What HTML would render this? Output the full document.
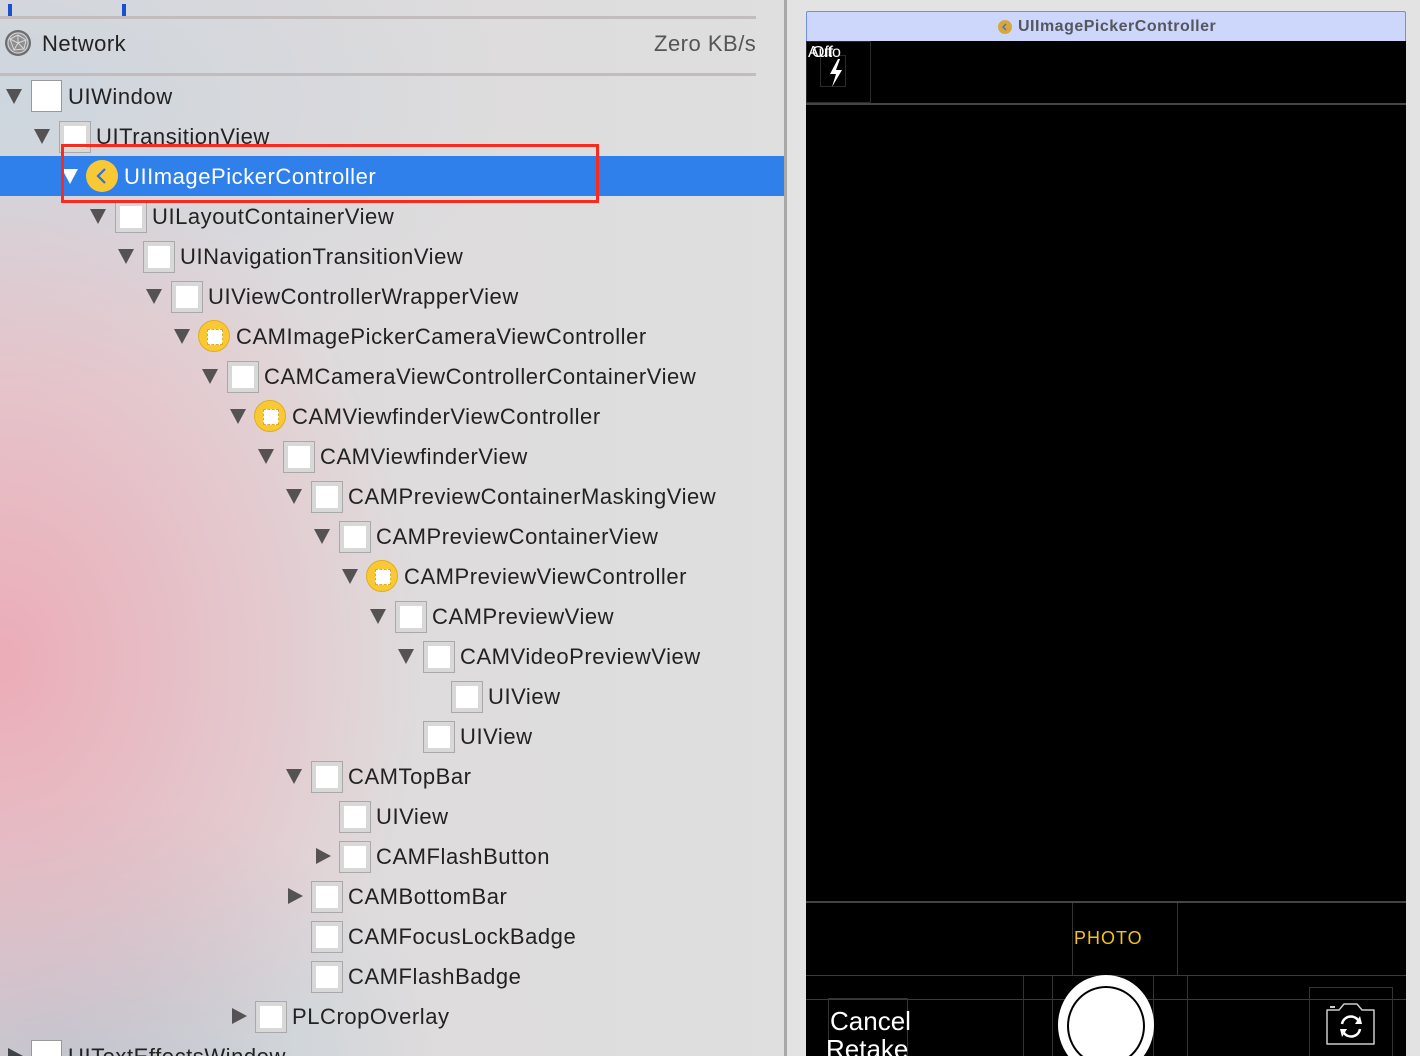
<!DOCTYPE html>
<html style="width:1420px;height:1056px;overflow:hidden"><head><meta charset="utf-8"><style>
*{margin:0;padding:0;box-sizing:border-box}
body{width:1420px;height:1056px;overflow:hidden;position:relative;font-family:"Liberation Sans",sans-serif;background:#e3e3e3}
#left{position:absolute;left:0;top:0;width:784px;height:1056px;overflow:hidden;
background:
radial-gradient(ellipse 420px 520px at 0px 660px, rgba(236,170,182,0.95), rgba(236,170,182,0) 100%),
radial-gradient(ellipse 380px 260px at 60px 1056px, rgba(185,205,214,1), rgba(185,205,214,0) 100%),
radial-gradient(ellipse 520px 300px at 0px 100px, rgba(205,214,222,1), rgba(205,214,222,0) 100%),
linear-gradient(90deg,#e0d8da 0%,#dedcdd 60%,#dfdfdf 100%);}
#divider{position:absolute;left:784px;top:0;width:3px;height:1056px;background:#a9a7a8}
.hl{position:absolute;left:0;width:756px;height:3px;background:#c2bcbd}
.row{position:absolute;left:0;width:784px;height:40px}
.tri{position:absolute;top:13px;width:0;height:0;border-left:8px solid transparent;border-right:8px solid transparent;border-top:15px solid #555254}
.trir{position:absolute;top:12px;width:0;height:0;border-top:8px solid transparent;border-bottom:8px solid transparent;border-left:15px solid #555254}
.box{position:absolute;top:5px;width:32px;height:32px;background:#d8d8d8;border:1px solid #a9a9a9}
.box::after{content:"";position:absolute;left:4px;top:4px;width:22px;height:22px;background:#fff}
.vc{position:absolute;top:4px;width:32px;height:32px;border-radius:50%;background:#f8c935;border:1px solid #e0ad20}
.vc::after{content:"";position:absolute;left:8px;top:8px;width:14px;height:14px;background:#fff;border:1px dashed #e0ad20}
.t{position:absolute;top:8px;font-size:22px;color:#222;white-space:nowrap;letter-spacing:0.55px}
</style></head><body>
<div id="left">
  <div style="position:absolute;left:8px;top:4px;width:4px;height:12px;background:#1a4fd0"></div>
  <div style="position:absolute;left:122px;top:4px;width:4px;height:12px;background:#1a4fd0"></div>
  <div class="hl" style="top:16px"></div>
  <div class="hl" style="top:73px"></div>
  <svg style="position:absolute;left:4px;top:29px" width="28" height="28" viewBox="0 0 28 28"><circle cx="14" cy="14" r="13" fill="#6d6d6f"/><circle cx="14" cy="14" r="11" fill="#8e8e90"/><g stroke="#d8d8d8" stroke-width="1" fill="none"><circle cx="14" cy="14" r="10"/><path d="M6 10 L14 6 L22 11 L20 20 L10 21 Z M14 6 L14 14 L22 11 M14 14 L10 21 M14 14 L20 20 M6 10 L14 14"/></g></svg>
  <div style="position:absolute;left:42px;top:31px;font-size:22px;color:#222;letter-spacing:0.5px">Network</div>
  <div style="position:absolute;left:654px;top:31px;font-size:22px;color:#555;letter-spacing:0.5px">Zero KB/s</div>
</div>
<div id="divider"></div>

<div id="rows" style="position:absolute;left:0;top:0;width:784px;height:1056px;overflow:hidden">
<div class="row" style="top:76px"><div class="tri" style="left:6px"></div><div style="position:absolute;left:31px;top:4px;width:31px;height:32px;background:#fff;border:1px solid #999"></div><div class="t" style="left:68px">UIWindow</div></div>
<div class="row" style="top:116px"><div class="tri" style="left:34px"></div><div class="box" style="left:59px"></div><div class="t" style="left:96px">UITransitionView</div></div>
<div class="row" style="top:156px;background:#2f80ea"><div class="tri" style="left:62px;border-top-color:#fff"></div><div style="position:absolute;left:86px;top:4px;width:32px;height:32px;border-radius:50%;background:#f8c935"></div><svg style="position:absolute;left:86px;top:4px" width="32" height="32"><path d="M19 9 L12 16 L19 23" stroke="#2f6fe0" stroke-width="2.2" fill="none"/></svg><div class="t" style="left:124px;color:#fff">UIImagePickerController</div></div>
<div class="row" style="top:196px"><div class="tri" style="left:90px"></div><div class="box" style="left:115px"></div><div class="t" style="left:152px">UILayoutContainerView</div></div>
<div class="row" style="top:236px"><div class="tri" style="left:118px"></div><div class="box" style="left:143px"></div><div class="t" style="left:180px">UINavigationTransitionView</div></div>
<div class="row" style="top:276px"><div class="tri" style="left:146px"></div><div class="box" style="left:171px"></div><div class="t" style="left:208px">UIViewControllerWrapperView</div></div>
<div class="row" style="top:316px"><div class="tri" style="left:174px"></div><div class="vc" style="left:198px"></div><div class="t" style="left:236px">CAMImagePickerCameraViewController</div></div>
<div class="row" style="top:356px"><div class="tri" style="left:202px"></div><div class="box" style="left:227px"></div><div class="t" style="left:264px">CAMCameraViewControllerContainerView</div></div>
<div class="row" style="top:396px"><div class="tri" style="left:230px"></div><div class="vc" style="left:254px"></div><div class="t" style="left:292px">CAMViewfinderViewController</div></div>
<div class="row" style="top:436px"><div class="tri" style="left:258px"></div><div class="box" style="left:283px"></div><div class="t" style="left:320px">CAMViewfinderView</div></div>
<div class="row" style="top:476px"><div class="tri" style="left:286px"></div><div class="box" style="left:311px"></div><div class="t" style="left:348px">CAMPreviewContainerMaskingView</div></div>
<div class="row" style="top:516px"><div class="tri" style="left:314px"></div><div class="box" style="left:339px"></div><div class="t" style="left:376px">CAMPreviewContainerView</div></div>
<div class="row" style="top:556px"><div class="tri" style="left:342px"></div><div class="vc" style="left:366px"></div><div class="t" style="left:404px">CAMPreviewViewController</div></div>
<div class="row" style="top:596px"><div class="tri" style="left:370px"></div><div class="box" style="left:395px"></div><div class="t" style="left:432px">CAMPreviewView</div></div>
<div class="row" style="top:636px"><div class="tri" style="left:398px"></div><div class="box" style="left:423px"></div><div class="t" style="left:460px">CAMVideoPreviewView</div></div>
<div class="row" style="top:676px"><div class="box" style="left:451px"></div><div class="t" style="left:488px">UIView</div></div>
<div class="row" style="top:716px"><div class="box" style="left:423px"></div><div class="t" style="left:460px">UIView</div></div>
<div class="row" style="top:756px"><div class="tri" style="left:286px"></div><div class="box" style="left:311px"></div><div class="t" style="left:348px">CAMTopBar</div></div>
<div class="row" style="top:796px"><div class="box" style="left:339px"></div><div class="t" style="left:376px">UIView</div></div>
<div class="row" style="top:836px"><div class="trir" style="left:316px"></div><div class="box" style="left:339px"></div><div class="t" style="left:376px">CAMFlashButton</div></div>
<div class="row" style="top:876px"><div class="trir" style="left:288px"></div><div class="box" style="left:311px"></div><div class="t" style="left:348px">CAMBottomBar</div></div>
<div class="row" style="top:916px"><div class="box" style="left:311px"></div><div class="t" style="left:348px">CAMFocusLockBadge</div></div>
<div class="row" style="top:956px"><div class="box" style="left:311px"></div><div class="t" style="left:348px">CAMFlashBadge</div></div>
<div class="row" style="top:996px"><div class="trir" style="left:232px"></div><div class="box" style="left:255px"></div><div class="t" style="left:292px">PLCropOverlay</div></div>
<div class="row" style="top:1036px"><div class="trir" style="left:8px;border-left-color:#3f4446"></div><div style="position:absolute;left:31px;top:4px;width:31px;height:32px;background:#fff;border:1px solid #999"></div><div class="t" style="left:68px">UITextEffectsWindow</div></div>
</div>
<div style="position:absolute;left:61px;top:144px;width:538px;height:59px;border:3px solid #fb2a1e"></div>

<div style="position:absolute;left:806px;top:11px;width:600px;height:31px;background:#cdd6fb;border:1px solid #6f8fe6;border-bottom:none;border-radius:2px 2px 0 0"></div>
<div style="position:absolute;left:998px;top:20px;width:14px;height:14px;border-radius:50%;background:#d6a83c"></div>
<svg style="position:absolute;left:998px;top:20px" width="14" height="14"><path d="M8 4 L5 7 L8 10" stroke="#4a6fd0" stroke-width="1.4" fill="none"/></svg>
<div style="position:absolute;left:1018px;top:18px;font-size:16px;font-weight:bold;color:#55575e;letter-spacing:0.5px">UIImagePickerController</div>
<div style="position:absolute;left:806px;top:41px;width:600px;height:1015px;background:#000;overflow:hidden">
  <div style="position:absolute;left:0;top:0;width:65px;height:62px;border:1px solid #2a2a2a"></div>
  <div style="position:absolute;left:14px;top:14px;width:26px;height:32px;border:1px solid #2a2a2a"></div>
  <div style="position:absolute;left:2px;top:3px;font-size:16px;color:#fff">Auto</div>
  <div style="position:absolute;left:6px;top:3px;font-size:16px;color:#fff">Off</div>
  <svg style="position:absolute;left:22px;top:18px" width="16" height="28"><path d="M10 0 L2 15 L8 15 L4 28 L14 11 L8 11 L12 0 Z" fill="#fff"/></svg>
  <div style="position:absolute;left:0;top:62px;width:600px;height:2px;background:#444"></div>
  <div style="position:absolute;left:0;top:860px;width:600px;height:2px;background:#444"></div>
  <div style="position:absolute;left:266px;top:862px;width:106px;height:73px;border-left:1px solid #333;border-right:1px solid #333"></div>
  <div style="position:absolute;left:268px;top:887px;font-size:18px;color:#f4c21b;letter-spacing:1px">PHOTO</div>
  <div style="position:absolute;left:0;top:934px;width:600px;height:1px;background:#3a3a3a"></div>
  <div style="position:absolute;left:0;top:958px;width:600px;height:1px;background:#3a3a3a"></div>
  <div style="position:absolute;left:217px;top:934px;width:165px;height:90px;border-left:1px solid #333;border-right:1px solid #333"></div>
  <div style="position:absolute;left:246px;top:934px;width:102px;height:90px;border-left:1px solid #333;border-right:1px solid #333"></div>
  <div style="position:absolute;left:22px;top:957px;width:80px;height:70px;border:1px solid #333"></div>
  <div style="position:absolute;left:24px;top:965px;font-size:26px;color:#fff">Cancel</div>
  <div style="position:absolute;left:20px;top:993px;font-size:26px;color:#fff">Retake</div>
  <div style="position:absolute;left:252px;top:934px;width:96px;height:100px;border-radius:50%;background:#fff"></div>
  <div style="position:absolute;left:261px;top:945px;width:78px;height:80px;border-radius:50%;border:2px solid #000;background:#fff"></div>
  <div style="position:absolute;left:503px;top:946px;width:84px;height:80px;border:1px solid #333"></div>
  <svg style="position:absolute;left:518px;top:961px" width="54" height="44" viewBox="0 0 54 44"><path d="M3 8 H15 L20 2 H33 L38 8 H50 V42 H3 Z" fill="none" stroke="#ccc" stroke-width="1.5" stroke-linejoin="round"/><rect x="6" y="4" width="5" height="2" fill="#ccc"/><path d="M18 22 A9 9 0 0 1 34 18" fill="none" stroke="#fff" stroke-width="2.5"/><path d="M36 27 A9 9 0 0 1 20 31" fill="none" stroke="#fff" stroke-width="2.5"/><path d="M31 22 L38 22 L36 14 Z" fill="#fff"/><path d="M23 27 L16 27 L18 35 Z" fill="#fff"/></svg>
</div>
</body></html>
